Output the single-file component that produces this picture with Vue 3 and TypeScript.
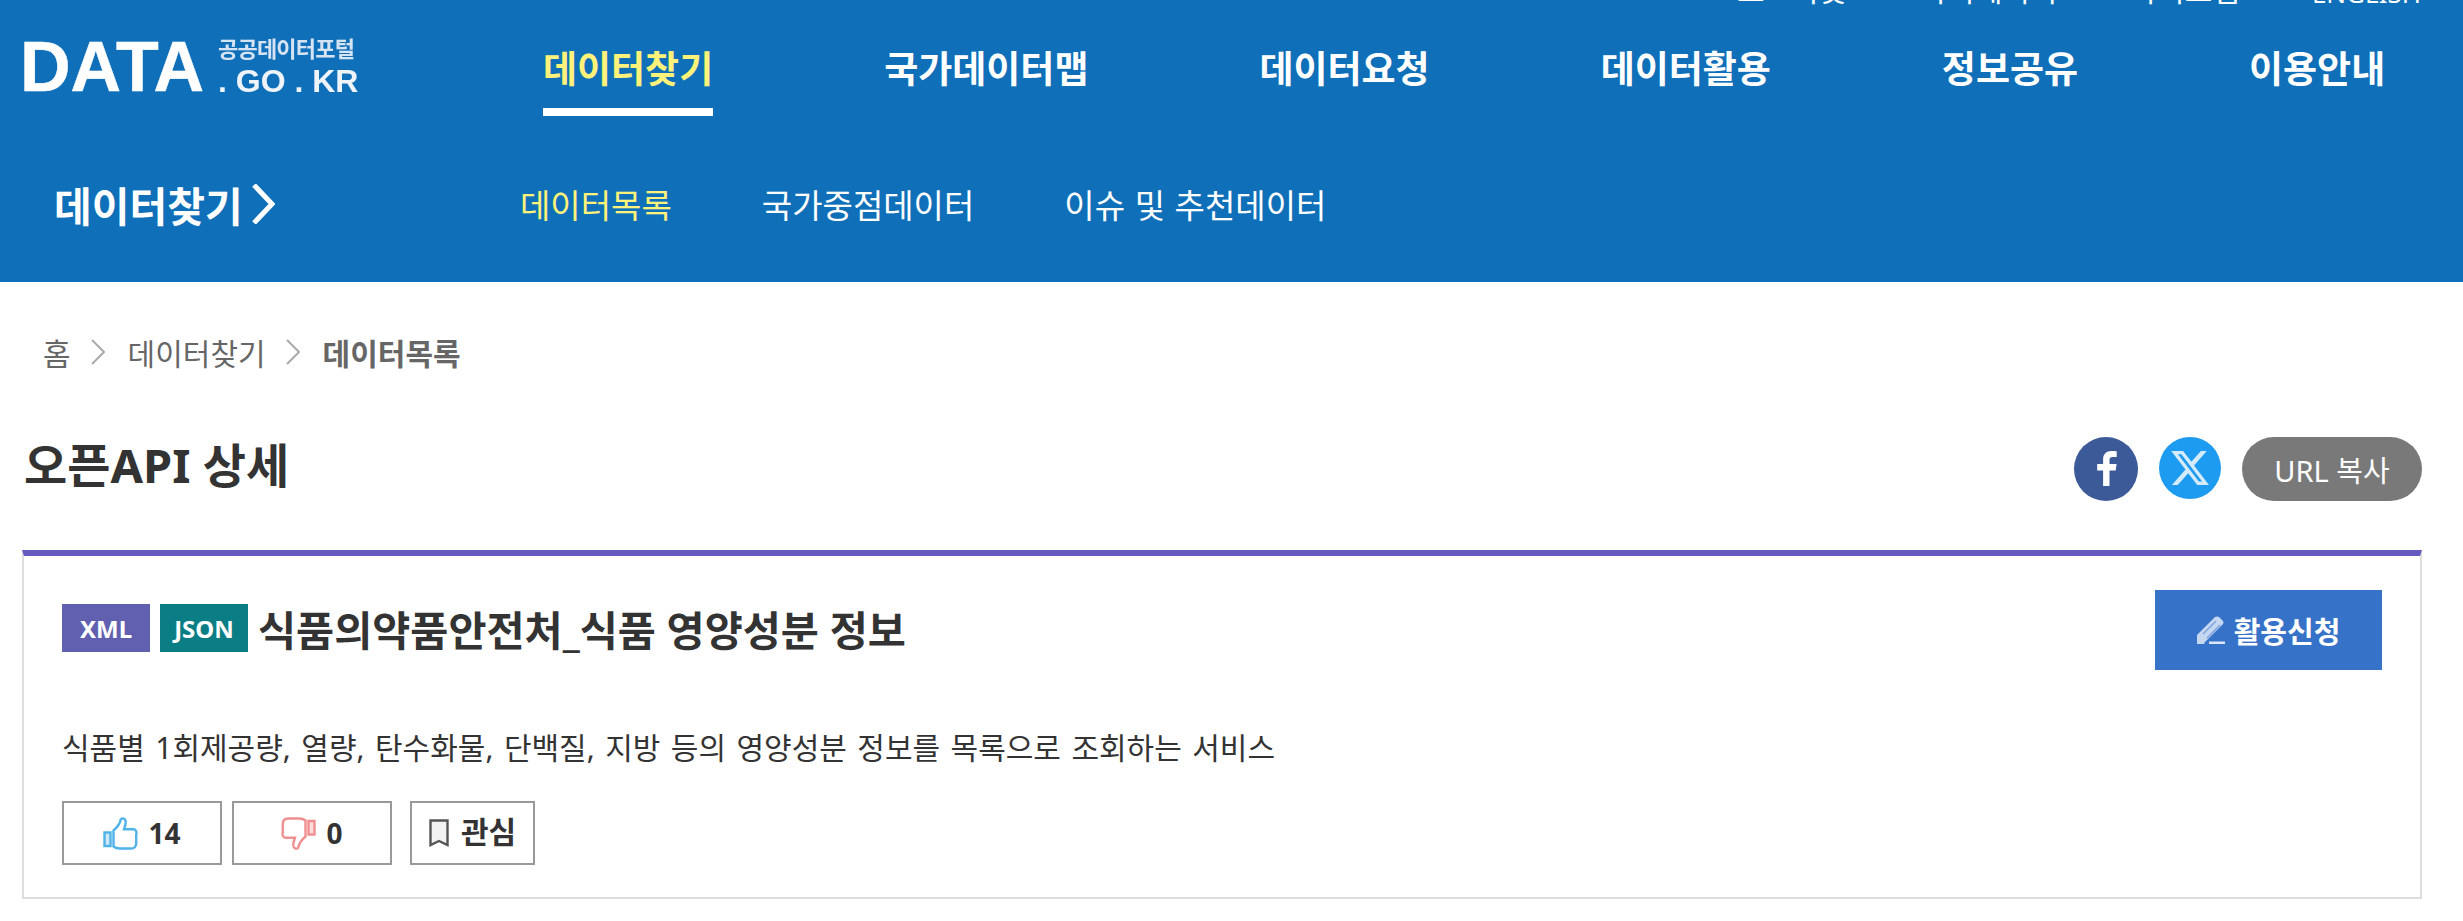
<template>
  <div class="wrap">
    <header class="header">
      <div class="util">
        <a v-for="item in utilMenu" :key="item" class="util-link">{{ item }}</a>
        <a class="util-link en">ENGLISH</a>
      </div>
      <div class="gnb-row">
        <div class="logo">
          <span class="logo-data">DATA</span>
          <span class="logo-side">
            <span class="logo-kr">공공데이터포털</span>
            <span class="logo-go">. GO . KR</span>
          </span>
        </div>
        <nav class="gnb">
          <a
            v-for="(item, idx) in mainMenu"
            :key="item"
            class="gnb-item"
            :class="{ active: idx === 0 }"
          >{{ item }}</a>
        </nav>
      </div>
      <div class="sub-row">
        <div class="sub-title">
          데이터찾기
          <svg class="sub-chevron" viewBox="0 0 24 40" width="24" height="40">
            <path d="M3 1 L21 20 L3 39" fill="none" stroke="#fff" stroke-width="5" />
          </svg>
        </div>
        <nav class="sub-nav">
          <a
            v-for="(item, idx) in subMenu"
            :key="item"
            class="sub-item"
            :class="{ active: idx === 0 }"
          >{{ item }}</a>
        </nav>
      </div>
    </header>

    <main class="page">
      <div class="crumbs">
        <span>홈</span>
        <svg class="crumb-sep" viewBox="0 0 14 26" width="14" height="26">
          <path d="M1 1 L13 13 L1 25" fill="none" stroke="#aaa" stroke-width="2" />
        </svg>
        <span>데이터찾기</span>
        <svg class="crumb-sep" viewBox="0 0 14 26" width="14" height="26">
          <path d="M1 1 L13 13 L1 25" fill="none" stroke="#aaa" stroke-width="2" />
        </svg>
        <strong>데이터목록</strong>
      </div>

      <div class="title-row">
        <h2 class="page-title">오픈API 상세</h2>
        <div class="share">
          <a class="share-btn fb">
            <svg viewBox="0 0 64 64" width="64" height="64">
              <path
                d="M35.5 49V33.5h6.2l.9-6.6h-7.100v-3.600c0-2 .7-3.200 3.300-3.200h3.900v-5.800c-1-.1-3-.3-5.300-.3-5.100 0-8.300 3-8.300 8.500v4.400h-5.900v6.600h5.900V49z"
                fill="#fff"
              />
            </svg>
          </a>
          <a class="share-btn tw">
            <svg viewBox="0 0 24 24" width="42" height="42">
              <path
                d="M18.244 2.25h3.308l-7.227 8.26 8.502 11.24H16.17l-5.214-6.817L4.99 21.75H1.68l7.73-8.835L1.254 2.25H8.08l4.713 6.231zm-1.161 17.52h1.833L7.084 4.126H5.117z"
                fill="#d3ebfc"
              />
            </svg>
          </a>
          <button class="url-btn">URL 복사</button>
        </div>
      </div>

      <section class="card">
        <div class="card-head">
          <div class="card-title">
            <span class="badge xml">XML</span>
            <span class="badge json">JSON</span>
            <h3>식품의약품안전처_식품 영양성분 정보</h3>
          </div>
          <button class="apply-btn">
            <svg viewBox="0 0 28 28" width="28" height="28">
              <path d="M0 19 L18 1 Q20 0 22 1 L26 5 Q27 7 26 8 L8 26 L7 28 H0 Z" fill="#c6d7f1" />
              <path d="M6 18 L19 5 M10 22 L23 9" stroke="#7fa3de" stroke-width="1.500" fill="none" />
              <rect x="12" y="25.500" width="16" height="2.500" fill="#dbe6f7" />
            </svg>
            활용신청
          </button>
        </div>
        <p class="desc">{{ description }}</p>
        <div class="actions">
          <button class="act-btn vote">
            <svg viewBox="0 0 35 33" width="35" height="33">
              <path
                d="M10.500 13.500C14 10.500 17 7 17.800 2.300 19.500 .5 22.300 1.500 22.700 4.300 23 7 21.800 9.800 21 12.300H30.300C33 12.300 34 15 33.200 17.300V26.500C33 29.500 31 31.500 28 31.500H17C14 31.500 12 30.800 10.500 29.500Z"
                fill="none"
                stroke="#4fb3e8"
                stroke-width="2.400"
              />
              <path d="M1.500 15.500H7.500V29H1.500Z" fill="#cfe9f9" stroke="#4fb3e8" stroke-width="2.400" />
            </svg>
            <span>{{ likes }}</span>
          </button>
          <button class="act-btn vote">
            <svg viewBox="0 0 35 33" width="35" height="33">
              <g transform="rotate(180 17.500 16.500)">
                <path
                  d="M10.500 13.500C14 10.500 17 7 17.800 2.300 19.500 .5 22.300 1.500 22.700 4.300 23 7 21.800 9.800 21 12.300H30.300C33 12.300 34 15 33.200 17.300V26.500C33 29.500 31 31.500 28 31.500H17C14 31.500 12 30.800 10.500 29.500Z"
                  fill="none"
                  stroke="#f08f8f"
                  stroke-width="2.400"
                />
                <path d="M1.500 15.500H7.500V29H1.500Z" fill="#fbdcdc" stroke="#f08f8f" stroke-width="2.400" />
              </g>
            </svg>
            <span>{{ dislikes }}</span>
          </button>
          <button class="act-btn watch">
            <svg viewBox="0 0 20 28" width="20" height="28">
              <path d="M1.500 1.500H18.500V26L10 22 1.500 26Z" fill="#f2f2f2" stroke="#555" stroke-width="2.400" />
            </svg>
            <span class="watch-label">관심</span>
          </button>
        </div>
      </section>
    </main>
  </div>
</template>

<script setup lang="ts">
const utilMenu: string[] = ['로그아웃', '마이페이지', '사이트맵']
const mainMenu: string[] = ['데이터찾기', '국가데이터맵', '데이터요청', '데이터활용', '정보공유', '이용안내']
const subMenu: string[] = ['데이터목록', '국가중점데이터', '이슈 및 추천데이터']

const description = '식품별 1회제공량, 열량, 탄수화물, 단백질, 지방 등의 영양성분 정보를 목록으로 조회하는 서비스'
const likes = 14
const dislikes = 0
</script>

<style>
html,
body {
  margin: 0;
  background: #fff;
}
</style>

<style scoped>
.wrap {
  font-family: "Noto Sans", "Noto Sans CJK KR", sans-serif;
  color: #333;
  height: 921px;
  overflow: hidden;
}

/* header */
.header {
  height: 282px;
  background: #0f6fb9;
  color: #fff;
}

.util {
  height: 5px;
  overflow: hidden;
  display: flex;
  justify-content: flex-end;
  align-items: flex-end;
  gap: 72px;
  padding-right: 42px;
  font-size: 30px;
  line-height: 31px;
}

.util-link {
  flex: none;
}

.util-link.en {
  font-size: 26px;
  line-height: 24px;
}

.gnb-row {
  height: 111px;
  display: flex;
  align-items: flex-end;
}

.logo {
  width: 543px;
  height: 54px;
  padding-left: 20px;
  margin-bottom: 24px;
  box-sizing: border-box;
  display: flex;
  overflow: hidden;
  font-family: "Liberation Sans", "Noto Sans CJK KR", sans-serif;
  font-weight: 700;
  filter: blur(0.5px);
}

.logo-data {
  width: 198px;
  font-size: 70px;
  line-height: 58px;
  -webkit-text-stroke: 0.5px #fff;
}

.logo-side {
  display: flex;
  flex-direction: column;
  width: 140px;
}

.logo-kr {
  font-size: 22px;
  line-height: 24px;
  white-space: nowrap;
  letter-spacing: -0.8px;
  color: #d5e3f2;
}

.logo-go {
  font-size: 32px;
  line-height: 38px;
  white-space: nowrap;
  color: #eef4fa;
}

.gnb {
  display: flex;
  gap: 171px;
}

.gnb-item {
  font-size: 37px;
  font-weight: 700;
  line-height: 52px;
  padding-bottom: 13px;
  border-bottom: 8px solid transparent;
}

.gnb-item.active {
  color: #fff27a;
  border-bottom-color: #fff;
}

.sub-row {
  display: flex;
  align-items: center;
  padding: 58px 0 0 54px;
  height: 60px;
}

.sub-title {
  width: 466px;
  display: flex;
  align-items: center;
  gap: 8px;
  font-size: 41px;
  font-weight: 700;
}

.sub-nav {
  display: flex;
  gap: 90px;
  word-spacing: 1px;
}

.sub-item {
  font-size: 33px;
}

.sub-item.active {
  color: #fff27a;
}

/* content */
.page {
  padding: 0 41px 0 22px;
}

.crumbs {
  display: flex;
  align-items: center;
  gap: 22px;
  height: 40px;
  margin-top: 50px;
  padding-left: 21px;
  font-size: 30px;
  color: #666;
}

.crumbs strong {
  font-weight: 700;
}

.crumb-sep {
  margin: 0 1px 0 -2px;
}

.title-row {
  display: flex;
  justify-content: space-between;
  align-items: center;
  height: 64px;
  margin-top: 65px;
}

.page-title {
  margin: 0 0 13px 2px;
  font-size: 47px;
  font-weight: 700;
  color: #333;
}

.share {
  display: flex;
  align-items: center;
  gap: 21px;
}

.share-btn {
  width: 64px;
  height: 64px;
  border-radius: 50%;
  display: flex;
  align-items: center;
  justify-content: center;
}

.share-btn.fb {
  background: #3d5a98;
}

.share-btn.tw {
  width: 62px;
  height: 62px;
  background: #1d9bf0;
  margin-bottom: 2px;
}

.url-btn {
  width: 180px;
  height: 64px;
  border: none;
  border-radius: 32px;
  background: #797979;
  color: #fff;
  font-family: inherit;
  font-size: 29px;
  padding: 0;
}

.card {
  margin-top: 49px;
  height: 349px;
  box-sizing: border-box;
  border: 2px solid #ddd;
  border-top: 6px solid #665cc0;
  padding: 34px 38px 32px;
  display: flex;
  flex-direction: column;
}

.card-head {
  display: flex;
  justify-content: space-between;
  align-items: center;
  height: 80px;
}

.card-title {
  display: flex;
  align-items: center;
  margin-top: -4px;
}

.card-title h3 {
  margin: 0 0 0 10px;
  font-size: 41.400px;
  font-weight: 700;
  color: #333;
}

.badge {
  width: 88px;
  height: 48px;
  display: flex;
  align-items: center;
  justify-content: center;
  color: #fff;
  font-size: 24px;
  font-weight: 700;
}

.badge.xml {
  background: #6160b0;
}

.badge.json {
  margin-left: 10px;
  background: #0b7d85;
}

.apply-btn {
  width: 227px;
  height: 80px;
  border: none;
  background: #3672c8;
  color: #fff;
  font-family: inherit;
  font-size: 29px;
  font-weight: 700;
  display: flex;
  align-items: center;
  justify-content: center;
  gap: 9px;
  padding: 0;
}

.desc {
  margin: 56px 0 0;
  font-size: 30px;
  line-height: 44px;
  word-spacing: 2.650px;
  color: #333;
}

.actions {
  display: flex;
  margin-top: auto;
}

.act-btn {
  height: 64px;
  box-sizing: border-box;
  border: 2px solid #999;
  background: #fff;
  color: #333;
  font-family: inherit;
  font-size: 27px;
  font-weight: 700;
  display: flex;
  align-items: center;
  justify-content: center;
  gap: 12px;
  padding: 0;
}

.act-btn.vote {
  width: 160px;
  margin-right: 10px;
  gap: 10px;
  font-size: 28px;
}

.act-btn.watch {
  width: 125px;
  margin-left: 8px;
}

.watch-label {
  font-size: 30px;
  margin-top: -6px;
}
</style>
